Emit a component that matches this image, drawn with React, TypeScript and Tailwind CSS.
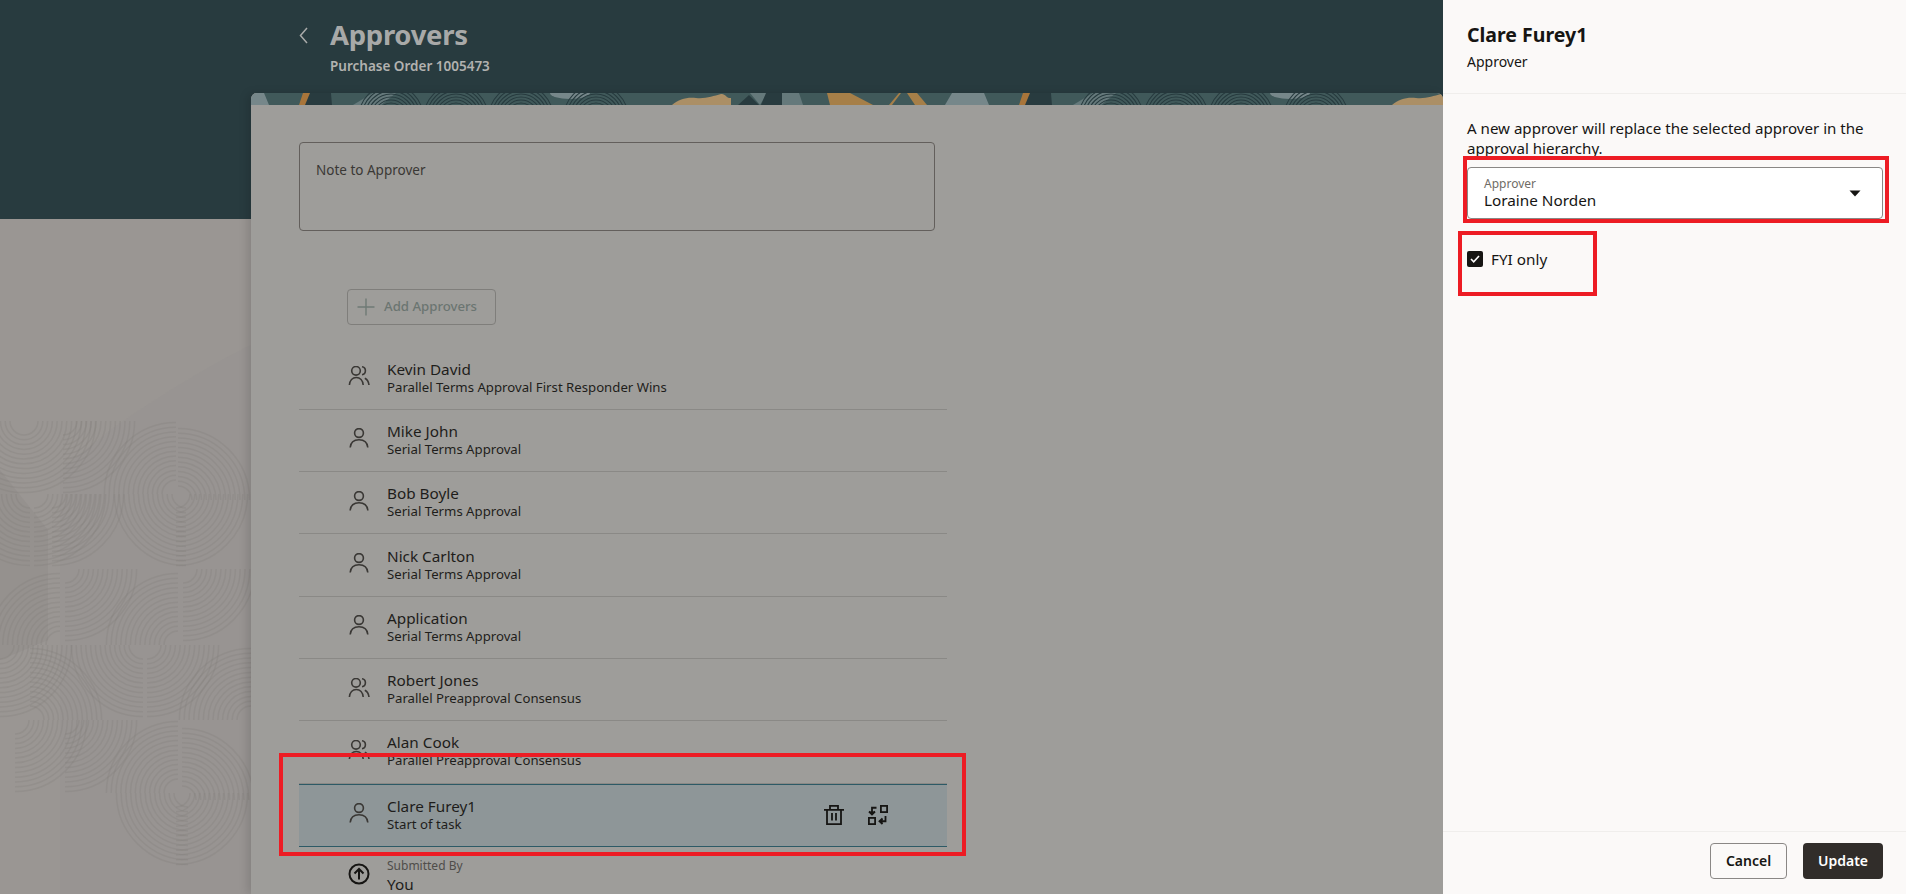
type Approver = { name: string; role: string; group?: boolean }

const approvers: Approver[] = [
  { name: 'Kevin David', role: 'Parallel Terms Approval First Responder Wins', group: true },
  { name: 'Mike John', role: 'Serial Terms Approval' },
  { name: 'Bob Boyle', role: 'Serial Terms Approval' },
  { name: 'Nick Carlton', role: 'Serial Terms Approval' },
  { name: 'Application', role: 'Serial Terms Approval' },
  { name: 'Robert Jones', role: 'Parallel Preapproval Consensus', group: true },
  { name: 'Alan Cook', role: 'Parallel Preapproval Consensus', group: true },
]

// corner of the quarter circle, then which way it opens
const tiles: [number, number, number, number][] = [
  [24, 421, 1, 1], [24, 421, -1, 1], [63, 421, 1, 1], [176, 494, -1, -1], [178, 500, 1, -1],
  [34, 494, 1, 1], [30, 494, -1, 1], [52, 494, 1, 1], [186, 494, -1, 1], [176, 494, 1, 1],
  [60, 645, -1, -1], [65, 569, 1, 1], [178, 645, -1, -1], [183, 569, 1, 1],
  [0, 645, 1, 1], [30, 720, 1, -1], [143, 645, -1, 1], [147, 645, 1, 1], [251, 720, -1, -1],
  [65, 720, 1, 1], [15, 720, 1, 1], [178, 793, -1, -1], [182, 800, 1, -1], [188, 793, -1, 1], [176, 793, 1, 1],
]

function arc(cx: number, cy: number, r: number, dx: number, dy: number) {
  const sweep = dx * dy > 0 ? 1 : 0
  return `M${cx + dx * r} ${cy}A${r} ${r} 0 0 ${sweep} ${cx} ${cy + dy * r}`
}

const radii = Array.from({ length: 13 }, (_, i) => 14 + i * 4.8)

function Backdrop() {
  return (
    <svg className="absolute left-0 top-[219px]" width="251" height="675" viewBox="0 219 251 675" fill="none">
      <path d="M110 430C160 395 210 365 251 345V894H60V470Z" fill="#94908e" opacity=".25" />
      <path d="M0 470L48 530V640L0 660Z" fill="#8f8c89" opacity=".5" />
      {tiles.map(([cx, cy, dx, dy], i) =>
        radii.map((r) => (
          <path key={`${i}-${r}`} d={arc(cx, cy, r, dx, dy)} stroke="#7e7c79" strokeOpacity=".26" strokeWidth="1.5" />
        )),
      )}
    </svg>
  )
}

const stripArcs: [number, number][] = [[140, 24], [205, 24], [270, 24], [345, 24]]

function Strip() {
  return (
    <svg className="block h-full w-full" preserveAspectRatio="none">
      <defs>
        <pattern id="strip" patternUnits="userSpaceOnUse" width="720" height="12">
          <rect width="720" height="12" fill="#40595a" />
          <path d="M0 0H13L18 12H0Z" fill="#76878a" />
          <path d="M57 0H80L81 12H52Z" fill="#283b3f" />
          <path d="M52 0H59L54 12H48Z" fill="#a8753a" />
          <path d="M122 0H145L130 12H102Z" fill="#65797b" />
          <ellipse cx="319" cy="0" rx="20" ry="6" fill="#76878a" />
          {stripArcs.map(([cx, cy]) =>
            [14, 17, 20, 23, 26, 29, 32].map((r) => (
              <g key={`${cx}-${r}`} stroke="#263a3e" strokeWidth="1.1" fill="none">
                <path d={arc(cx, cy, r, -1, -1)} />
                <path d={arc(cx, cy, r, 1, -1)} />
              </g>
            )),
          )}
          <path d="M421 12C428 6 436 4 445 5C455 6 462 3 470 1C474 0 476 6 480 5V12Z" fill="#ab8f66" />
          <path d="M474 7L480 12H474Z" fill="#ab8f66" />
          <path d="M487 12L498 2L508 12Z" fill="#283b3f" />
          <path d="M499 0H516L509 12Z" fill="#65797b" />
          <path d="M515 0H531V12H510Z" fill="#283b3f" />
          <path d="M531 0H548L552 12H531Z" fill="#65797b" />
          <path d="M576 0H599L622 12H579Z" fill="#a67f48" />
          <path d="M648 0H650L641 12H638Z" fill="#a67f48" />
          <path d="M656 0H666L676 12H664Z" fill="#a67f48" />
          <path d="M701 0H720V12H694Z" fill="#76878a" />
        </pattern>
      </defs>
      <rect width="100%" height="100%" fill="url(#strip)" />
    </svg>
  )
}

function PersonIcon() {
  return (
    <svg width="24" height="24" viewBox="0 0 24 24" fill="none" stroke="#3a3835" strokeWidth="1.6">
      <circle cx="12" cy="5" r="4.4" />
      <path d="M3.2 19.5C3.6 14.5 7 11.7 12 11.7S20.4 14.5 20.8 19.5" />
    </svg>
  )
}

function GroupIcon() {
  return (
    <svg width="24" height="24" viewBox="0 0 24 24" fill="none" stroke="#3a3835" strokeWidth="1.6">
      <circle cx="9" cy="4.8" r="4.3" />
      <path d="M15 0.8C17.2 1 18.4 2.8 18.4 4.8C18.4 6.8 17.2 8.4 15 8.7" />
      <path d="M2.4 19C2.8 14.5 5.5 11.5 9.3 11.5S15.8 14.5 16.2 19" />
      <path d="M17.8 12.2C20.2 13.2 21.6 15.6 22 19" />
    </svg>
  )
}

function TrashIcon() {
  return (
    <svg width="20" height="20" viewBox="0 0 20 20" fill="none" stroke="#161513" strokeWidth="1.8">
      <path d="M0 4.9H20M3 4.9V19.1H17V4.9M6 4.9V0.9H14V4.9M8 8V15.5M12 8V15.5" />
    </svg>
  )
}

function SwapIcon() {
  return (
    <svg width="20" height="20" viewBox="0 0 20 20" fill="none" stroke="#161513" strokeWidth="1.8">
      <rect x="12.9" y="0.9" width="6.2" height="6.2" />
      <rect x="0.9" y="12.9" width="6.2" height="6.2" />
      <path d="M8.5 2.75H4V8" />
      <path d="M1 6.5L4 9.5L7 6.5" fill="#161513" />
      <path d="M17.5 11V16.25H12" />
      <path d="M14.5 13.5L11.5 16.25L14.5 19" fill="#161513" />
    </svg>
  )
}

function Row({ name, role, group }: Approver) {
  return (
    <div className="flex h-[62.3px] items-center gap-4 border-b border-[#8a8986] pl-12">
      {group ? <GroupIcon /> : <PersonIcon />}
      <div className="flex flex-col pb-[2px]">
        <span className="text-[15.3px] leading-[20px] text-[#1e1d1b]">{name}</span>
        <span className="text-[13.2px] leading-[17px] text-[#1e1d1b]">{role}</span>
      </div>
    </div>
  )
}

export default function App() {
  return (
    <div className="flex h-[894px] w-[1906px] overflow-hidden bg-[#9a9693] font-['Noto_Sans',sans-serif]">
      <main className="relative w-[1443px] shrink-0 overflow-hidden">
        <div className="absolute inset-x-0 top-0 h-[219px] bg-[#283b3f]" />
        <Backdrop />

        <header className="relative flex h-[93px] items-start pl-[299px]">
          <svg className="mt-[27px] w-[10px]" height="17" viewBox="0 0 10 17" fill="none" stroke="#a9aaa9" strokeWidth="1.5">
            <path d="M8 1L1.5 8.5L8 16" />
          </svg>
          <div className="ml-[21px] flex flex-col">
            <h1 className="mt-[15px] text-[27.5px] leading-[40px] font-bold tracking-[-0.3px] text-[#a8a9a8]">Approvers</h1>
            <p className="mt-[2px] text-[13.5px] leading-[18px] font-semibold text-[#b2b2b0]">Purchase Order 1005473</p>
          </div>
        </header>

        <section className="relative ml-[251px] h-[801px] overflow-hidden rounded-t-md bg-[#9e9d9a] shadow-[-4px_0_8px_rgba(0,0,0,0.12)]">
          <div className="h-[12px]">
            <Strip />
          </div>
          <div className="pl-12">
            <div className="mt-[37px] h-[89px] w-[636px] rounded border border-[#635f5c] px-4 pt-[17px] text-[13.5px] leading-[20px] text-[#3a3835]">
              Note to Approver
            </div>
            <button className="mt-[58px] ml-12 flex h-[36px] w-[149px] items-center gap-[9px] rounded border border-[#7f7e7b] pl-[9px] text-[13.2px] font-medium text-[#6b7571]">
              <svg width="18" height="18" viewBox="0 0 18 18" fill="none" stroke="#6f7a75" strokeWidth="1.4">
                <path d="M9 0.5V17.5M0.5 9H17.5" />
              </svg>
              Add Approvers
            </button>
            <div className="mt-[22.5px] w-[647.5px]">
              {approvers.map((a) => (
                <Row key={a.name} {...a} />
              ))}
              <div className="flex h-[63px] items-center gap-4 border-y border-[#2d5a66] bg-[#8e9698] pl-12">
                <PersonIcon />
                <div className="flex flex-col pb-[2px]">
                  <span className="text-[15.3px] leading-[20px] text-[#1e1d1b]">Clare Furey1</span>
                  <span className="text-[13.2px] leading-[17px] text-[#1e1d1b]">Start of task</span>
                </div>
                <div className="ml-auto flex gap-6 pr-[59px]">
                  <TrashIcon />
                  <SwapIcon />
                </div>
              </div>
              <div className="flex items-start gap-4 pt-[11px] pl-12">
                <svg className="mt-[4px]" width="24" height="24" viewBox="0 0 24 24" fill="none" stroke="#161513" strokeWidth="2">
                  <circle cx="12" cy="12" r="9.5" />
                  <path d="M12 17.5V7M7.5 11.5L12 7L16.5 11.5" />
                </svg>
                <div className="flex flex-col">
                  <span className="text-xs leading-[16px] text-[#4f4d4a]">Submitted By</span>
                  <span className="text-[15.3px] leading-[20px] text-[#1e1d1b]">You</span>
                </div>
              </div>
            </div>
          </div>
        </section>

        <div className="absolute left-[279px] top-[753px] h-[103px] w-[687px] border-4 border-[#ed1c24]" />
      </main>

      <aside className="relative flex w-[463px] shrink-0 flex-col bg-[#fbf9f8] text-[#161513]">
        <div className="h-[94px] border-b border-[#f0eeec] pl-6 pt-[21px]">
          <h2 className="text-[19.5px] leading-[28px] font-bold">Clare Furey1</h2>
          <p className="mt-[3px] text-sm leading-[20px]">Approver</p>
        </div>
        <div className="flex-1 px-6 pt-[24px]">
          <p className="w-[415px] text-[15.1px] leading-[20px]">
            A new approver will replace the selected approver in the approval hierarchy.
          </p>
          <div className="mt-[9px] flex h-[52px] w-[416px] items-center justify-between rounded border border-[#8a8785] bg-white pl-4 pr-[21px]">
            <div className="flex flex-col">
              <span className="text-xs leading-[14px] text-[#6f6c66]">Approver</span>
              <span className="text-[15.3px] leading-[19px]">Loraine Norden</span>
            </div>
            <svg width="12" height="7" viewBox="0 0 12 7" fill="#161513">
              <path d="M0.5 0.5H11.5L6 6.5Z" />
            </svg>
          </div>
          <label className="mt-[30px] flex items-center gap-2">
            <span className="flex h-4 w-4 items-center justify-center rounded-[2px] bg-[#161513]">
              <svg width="10" height="8" viewBox="0 0 10 8" fill="none" stroke="#ffffff" strokeWidth="1.6">
                <path d="M1 4L3.7 6.8L9 1" />
              </svg>
            </span>
            <span className="text-[15.3px] leading-[20px]">FYI only</span>
          </label>
        </div>
        <div className="flex h-[63px] items-center justify-end gap-4 border-t border-[#f0eeec] pr-[23px] pb-[5px]">
          <button className="h-9 w-[77px] rounded border border-[#8a8785] text-sm font-semibold">Cancel</button>
          <button className="h-9 w-20 rounded bg-[#312d2a] text-sm font-semibold text-white">Update</button>
        </div>

        <div className="absolute left-[20px] top-[156px] h-[67px] w-[426px] border-4 border-[#ed1c24]" />
        <div className="absolute left-[15px] top-[231px] h-[65px] w-[139px] border-4 border-[#ed1c24]" />
      </aside>
    </div>
  )
}
